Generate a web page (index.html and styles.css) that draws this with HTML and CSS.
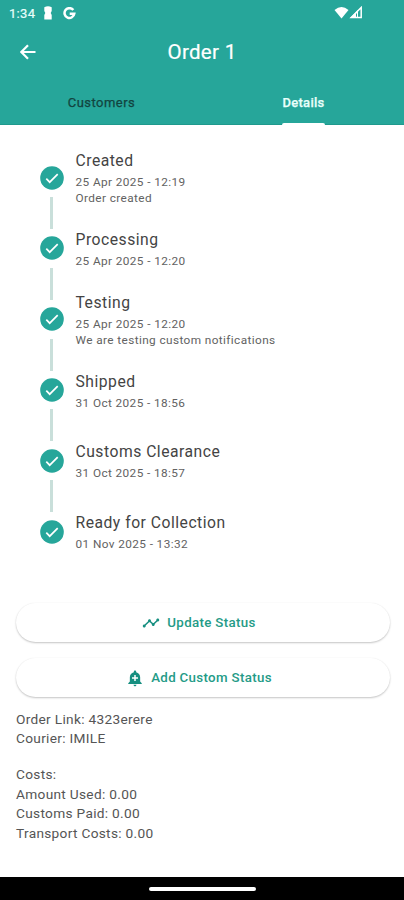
FILE: index.html
```html
<!DOCTYPE html>
<html lang="en">
<head>
<meta charset="utf-8">
<title>Order 1</title>
<link rel="stylesheet" href="styles.css">
</head>
<body>
<svg class="defs" width="0" height="0"><symbol id="check" viewBox="0 0 24 24"><circle cx="12" cy="12" r="11.8" fill="#26a69a"/><path d="M6.3 12.7l3.4 3.5 8-8" fill="none" stroke="#fff" stroke-width="1.7"/></symbol></svg>
<header class="header">
  <div class="status-bar">
    <span class="time">1:34</span>
    <svg class="keyhole" viewBox="0 0 8 14"><path d="M0.3 1.2Q4-.8 7.7 1.2V5L6.700 7 7.7 9V13.500H.3V9L1.300 7 .3 5z" fill="#fff"/></svg>
    <svg class="google" viewBox="0 0 13 13"><path d="M10.300 3A4.900 4.900 0 1 0 11.300 6.700H6.700" fill="none" stroke="#fff" stroke-width="2.500"/></svg>
    <svg class="signals" viewBox="0 0 30 14"><path d="M.5 4Q7.500-2.200 14.500 4L7.500 12.500z" fill="#fff"/><path d="M17.200 11.500L27.200 1.500V11.500z" fill="none" stroke="#fff" stroke-width="1.500"/><path d="M16 12L24 4V12z" fill="#fff"/><path d="M22.500 7.500V10.700" stroke="#26a69a"/></svg>
  </div>
  <div class="app-bar">
    <svg class="back" viewBox="0 0 16 16"><path d="M15.500 8H1.500M8 1.200L1.300 8 8 14.800" fill="none" stroke="#fff" stroke-width="2.200"/></svg>
    <h1>Order 1</h1>
  </div>
  <nav class="tabs"><span class="tab">Customers</span><span class="tab active"><span class="tab-label">Details</span></span></nav>
</header>
<main>
  <ol class="timeline">
    <li><svg class="check"><use href="#check"/></svg><div class="step"><h2>Created</h2><p>25 Apr 2025 - 12:19</p><p>Order created</p></div></li>
    <li><svg class="check"><use href="#check"/></svg><div class="step"><h2>Processing</h2><p>25 Apr 2025 - 12:20</p></div></li>
    <li><svg class="check"><use href="#check"/></svg><div class="step"><h2>Testing</h2><p>25 Apr 2025 - 12:20</p><p>We are testing custom notifications</p></div></li>
    <li><svg class="check"><use href="#check"/></svg><div class="step"><h2>Shipped</h2><p>31 Oct 2025 - 18:56</p></div></li>
    <li><svg class="check"><use href="#check"/></svg><div class="step"><h2>Customs Clearance</h2><p>31 Oct 2025 - 18:57</p></div></li>
    <li><svg class="check"><use href="#check"/></svg><div class="step"><h2>Ready for Collection</h2><p>01 Nov 2025 - 13:32</p></div></li>
  </ol>
  <div class="actions">
    <button><svg class="trend" viewBox="0 0 24 24"><path d="M23 8c0 1.100-.9 2-2 2-.18 0-.35-.02-.51-.07l-3.560 3.550c.05.16.07.34.07.52 0 1.100-.9 2-2 2s-2-.9-2-2c0-.18.02-.36.07-.52l-2.550-2.550c-.16.05-.34.07-.52.07s-.36-.02-.52-.07l-4.550 4.560c.05.16.07.33.07.51 0 1.100-.9 2-2 2s-2-.9-2-2 .9-2 2-2c.18 0 .35.02.51.07l4.560-4.550C8.020 9.360 8 9.180 8 9c0-1.100.9-2 2-2s2 .9 2 2c0 .18-.02.36-.07.52l2.550 2.550c.16-.05.34-.07.52-.07s.36.02.52.07l3.550-3.560C19.020 8.350 19 8.180 19 8c0-1.100.9-2 2-2s2 .9 2 2z"/></svg><span>Update Status</span></button>
    <button><svg class="bell" viewBox="0 0 24 24"><path d="M10.010 21.010c0 1.100.89 1.990 1.990 1.990s1.990-.89 1.990-1.990h-3.980zm8.870-4.190V11c0-3.250-2.250-5.970-5.290-6.690v-.72C13.590 2.710 12.880 2 12 2s-1.590.71-1.590 1.590v.72C7.370 5.030 5.120 7.750 5.120 11v5.820L3 18.940V20h18v-1.060l-2.120-2.120zM16 13.010h-3v3h-2v-3H8V11h3V8h2v3h3v2.010z"/></svg><span>Add Custom Status</span></button>
  </div>
  <section class="details">
    <p>Order Link: 4323erere</p><p>Courier: IMILE</p>
    <p class="costs">Costs:</p><p>Amount Used: 0.00</p><p>Customs Paid: 0.00</p><p>Transport Costs: 0.00</p>
  </section>
</main>
<footer><span class="handle"></span></footer>
</body>
</html>
```
FILE: styles.css
```css
* { box-sizing: border-box; margin: 0; padding: 0; }
body { width: 404px; height: 900px; display: flex; flex-direction: column; background: #fff; color: #444; font-family: Roboto, sans-serif; overflow: hidden; }
svg { flex: none; display: block; }
.defs { position: absolute; }
.header { height: 125px; background: #26a69a; border-bottom: 1px solid #1f998d; color: #fff; flex: none; }
.status-bar { height: 26px; display: flex; align-items: center; padding-left: 9px; }
.time { width: 35px; font-size: 13px; letter-spacing: .3px; color: #e8fffb; -webkit-text-stroke: .2px; }
.keyhole { width: 8px; height: 14px; }
.google { width: 13px; height: 13px; margin-left: 11px; }
.signals { width: 30px; height: 14px; margin-left: 258px; }
.app-bar { height: 52px; display: grid; grid-template-columns: 48px 1fr 48px; align-items: center; }
.back { width: 16px; height: 16px; margin-left: 20px; }
h1 { font-size: 20.500px; font-weight: 400; text-align: center; line-height: 28px; letter-spacing: .3px; -webkit-text-stroke: .2px; }
.tabs { height: 47px; display: grid; grid-template-columns: 1fr 1fr; font-size: 13px; letter-spacing: .45px; line-height: 50px; text-align: center; }
.tab { color: #12443f; padding-left: 1px; -webkit-text-stroke: .25px; }
.tab.active { display: flex; justify-content: center; color: #e9fffb; font-weight: 500; letter-spacing: .3px; }
.tab-label { height: 47px; width: 43px; display: flex; flex-direction: column; }
.tab-label::after { content: ""; height: 2px; flex: none; background: #fff; border-radius: 2px 2px 0 0; margin-top: -5px; }
main { flex: 1; }
.timeline { list-style: none; padding: 40.500px 0 0 39.500px; }
.timeline li { display: grid; grid-template-columns: 24px 1fr; column-gap: 12px; grid-template-rows: 24px 46.850px; align-items: center; }
.timeline li:last-child { grid-template-rows: 24px; }
.timeline li:not(:last-child)::after { content: ""; width: 3px; height: 32px; background: #c9dfda; justify-self: center; grid-row: 2; align-self: center; }
.check { width: 24px; height: 24px; }
.step { height: 24px; display: flex; flex-direction: column; justify-content: center; white-space: nowrap; }
h2 { font-size: 15.700px; line-height: 20px; padding-top: 2px; margin-bottom: 3px; font-weight: 400; letter-spacing: .5px; flex: none; }
.step p { font-size: 11.800px; line-height: 16px; letter-spacing: .4px; flex: none; color: #626262; }
.actions { padding: 59.500px 14.500px 0 15.500px; display: grid; gap: 16px; }
button { height: 39px; border: 0; border-radius: 20px; background: #fff; box-shadow: 0 1px 2px rgba(0,0,0,.23), 0 0 1px rgba(0,0,0,.06); color: #249b87; font: 500 13.300px Roboto, sans-serif; letter-spacing: .33px; display: flex; align-items: center; justify-content: center; gap: 7px; padding-right: 7px; }
button svg { width: 18px; height: 18px; fill: #168f80; }
.details { padding: 12.500px 16px 0; font-size: 13.700px; line-height: 19.650px; letter-spacing: .3px; color: #555; }
.details .costs { margin-top: 16px; }
footer { height: 23px; background: #000; display: flex; justify-content: center; align-items: center; flex: none; }
.handle { width: 107px; height: 4px; border-radius: 2px; background: #fff; }
```
